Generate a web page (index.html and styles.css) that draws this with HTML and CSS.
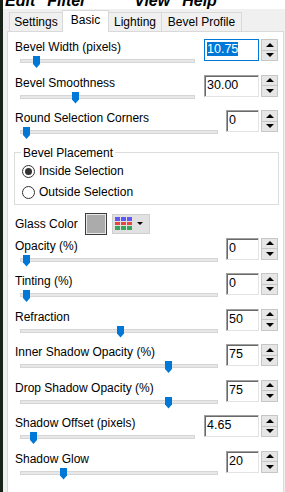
FILE: index.html
```html
<!DOCTYPE html>
<html lang="en">

<head>
    <meta charset="UTF-8" />
    <title>Bevel - Basic</title>
    <link rel="stylesheet" href="styles.css">
</head>

<body>
    <div class="menubar">
        <span>Edit</span><span>Filter</span><span>View</span><span>Help</span>
    </div>

    <div class="dialog">
        <div class="tabs">
            <div class="tab t-settings">Settings</div>
            <div class="tab t-basic active">Basic</div>
            <div class="tab t-lighting">Lighting</div>
            <div class="tab t-profile">Bevel Profile</div>
        </div>

        <div class="page">
            <div class="row">
                <div class="ctl">
                    <div class="label">Bevel Width (pixels)</div>
                    <div class="track wide"><span class="thumb" style="left: 12px;"></span></div>
                </div>
                <div class="spin">
                    <div class="edit wide focus"><span class="sel">10.75</span></div>
                    <div class="arrows"><span class="up"></span><span class="down"></span></div>
                </div>
            </div>

            <div class="row">
                <div class="ctl">
                    <div class="label">Bevel Smoothness</div>
                    <div class="track wide"><span class="thumb" style="left: 51px;"></span></div>
                </div>
                <div class="spin">
                    <div class="edit wide">30.00</div>
                    <div class="arrows"><span class="up"></span><span class="down"></span></div>
                </div>
            </div>

            <div class="row">
                <div class="ctl">
                    <div class="label">Round Selection Corners</div>
                    <div class="track"><span class="thumb" style="left: 2px;"></span></div>
                </div>
                <div class="spin">
                    <div class="edit">0</div>
                    <div class="arrows"><span class="up"></span><span class="down"></span></div>
                </div>
            </div>

            <fieldset class="group">
                <legend>Bevel Placement</legend>
                <div class="radio"><span class="dot checked"></span>Inside Selection</div>
                <div class="radio"><span class="dot"></span>Outside Selection</div>
            </fieldset>

            <div class="glass">
                <div class="glass-label">Glass Color</div>
                <div class="swatch"></div>
                <div class="picker">
                    <svg width="17" height="13" viewBox="0 0 17 13">
                        <rect x="0" y="0" width="5" height="4" fill="#6157f2" />
                        <rect x="6" y="0" width="5" height="4" fill="#6157f2" />
                        <rect x="12" y="0" width="5" height="4" fill="#6157f2" />
                        <rect x="0" y="5" width="5" height="3" fill="#e8453f" />
                        <rect x="6" y="5" width="5" height="3" fill="#e8453f" />
                        <rect x="12" y="5" width="5" height="3" fill="#e8453f" />
                        <rect x="0" y="9" width="5" height="4" fill="#38a35a" />
                        <rect x="6" y="9" width="5" height="4" fill="#38a35a" />
                        <rect x="12" y="9" width="5" height="4" fill="#38a35a" />
                    </svg>
                    <span class="caret"></span>
                </div>
            </div>

            <div class="row">
                <div class="ctl">
                    <div class="label">Opacity (%)</div>
                    <div class="track"><span class="thumb" style="left: 2px;"></span></div>
                </div>
                <div class="spin">
                    <div class="edit">0</div>
                    <div class="arrows"><span class="up"></span><span class="down"></span></div>
                </div>
            </div>

            <div class="row">
                <div class="ctl">
                    <div class="label">Tinting (%)</div>
                    <div class="track"><span class="thumb" style="left: 2px;"></span></div>
                </div>
                <div class="spin">
                    <div class="edit">0</div>
                    <div class="arrows"><span class="up"></span><span class="down"></span></div>
                </div>
            </div>

            <div class="row">
                <div class="ctl">
                    <div class="label">Refraction</div>
                    <div class="track"><span class="thumb" style="left: 96px;"></span></div>
                </div>
                <div class="spin">
                    <div class="edit">50</div>
                    <div class="arrows"><span class="up"></span><span class="down"></span></div>
                </div>
            </div>

            <div class="row">
                <div class="ctl">
                    <div class="label">Inner Shadow Opacity (%)</div>
                    <div class="track"><span class="thumb" style="left: 144px;"></span></div>
                </div>
                <div class="spin">
                    <div class="edit">75</div>
                    <div class="arrows"><span class="up"></span><span class="down"></span></div>
                </div>
            </div>

            <div class="row">
                <div class="ctl">
                    <div class="label">Drop Shadow Opacity (%)</div>
                    <div class="track"><span class="thumb" style="left: 144px;"></span></div>
                </div>
                <div class="spin">
                    <div class="edit">75</div>
                    <div class="arrows"><span class="up"></span><span class="down"></span></div>
                </div>
            </div>

            <div class="row">
                <div class="ctl">
                    <div class="label">Shadow Offset (pixels)</div>
                    <div class="track wide"><span class="thumb" style="left: 9px;"></span></div>
                </div>
                <div class="spin">
                    <div class="edit wide">4.65</div>
                    <div class="arrows"><span class="up"></span><span class="down"></span></div>
                </div>
            </div>

            <div class="row">
                <div class="ctl">
                    <div class="label">Shadow Glow</div>
                    <div class="track"><span class="thumb" style="left: 39px;"></span></div>
                </div>
                <div class="spin">
                    <div class="edit">20</div>
                    <div class="arrows"><span class="up"></span><span class="down"></span></div>
                </div>
            </div>
        </div>
    </div>
</body>

</html>
```

FILE: styles.css
```css
* {
    box-sizing: border-box;
}

html,
body {
    margin: 0;
    height: 100%;
}

body {
    font-family: "Liberation Sans", Arial, sans-serif;
    font-size: 12px;
    color: #000;
    background: #f0f0f0;
    border-left: 3px solid #18241a;
    overflow: hidden;
}

/* menu bar, only its lower part is visible */
.menubar {
    height: 9px;
    overflow: hidden;
    background: #fff;
    display: flex;
    align-items: flex-end;
    gap: 12px;
    padding-left: 2px;
    font: italic bold 16px/16px "Liberation Sans", Arial, sans-serif;
}

.menubar span:nth-child(3) {
    margin-left: 36px;
}

.dialog {
    padding-left: 4px;
    padding-right: 1px;
}

/* tabs */
.tabs {
    display: flex;
    align-items: flex-end;
    height: 22px;
    padding-left: 2px;
}

.tab {
    height: 19px;
    line-height: 18px;
    text-align: center;
    background: #f0f0f0;
    border: 1px solid #d9d9d9;
    border-bottom: none;
    margin-right: -1px;
}

.tab.active {
    height: 22px;
    line-height: 19px;
    background: #fff;
    position: relative;
    z-index: 1;
    margin-bottom: -1px;
}

.t-settings { width: 54px; }
.t-basic { width: 47px; }
.t-lighting { width: 54px; }
.t-profile { width: 81px; }

.page {
    background: #fff;
    border: 1px solid #d9d9d9;
    height: 470px;
    padding-top: 7px;
}

/* one label + slider + spin box */
.row {
    display: flex;
    justify-content: space-between;
    height: 35.5px;
    padding: 0 5px 0 7px;
}

.ctl {
    display: flex;
    flex-direction: column;
}

.label {
    line-height: 14px;
    margin-top: 1px;
    white-space: nowrap;
}

.track {
    position: relative;
    width: 198px;
    height: 4px;
    margin: 5px 0 0 5px;
    background: #e7e7e7;
    border: 1px solid #d6d6d6;
}

.track.wide {
    width: 175px;
}

.thumb {
    position: absolute;
    top: -4px;
    width: 7px;
    height: 12px;
    background: #0078d7;
    clip-path: polygon(0 0, 100% 0, 100% 66%, 50% 100%, 0 66%);
}

.spin {
    display: flex;
    gap: 2px;
    height: 22px;
}

.edit {
    width: 33px;
    height: 22px;
    padding-left: 2px;
    line-height: 18px;
    border: 1px solid;
    border-color: #a0a0a0 #e3e3e3 #e3e3e3 #a0a0a0;
    box-shadow: inset 1px 1px 0 #696969;
    font-size: 12.5px;
}

.edit.wide {
    width: 55px;
}

.edit.focus {
    border-color: #0078d7;
    box-shadow: none;
}

.sel {
    background: #0078d7;
    color: #fff;
}

.arrows {
    width: 17px;
    display: flex;
    flex-direction: column;
    border: 1px solid #c6c6c6;
    background: #e6e6e6;
}

.arrows span {
    flex: 1;
    display: flex;
    align-items: center;
    justify-content: center;
}

.arrows .up {
    border-bottom: 1px solid #c6c6c6;
}

.arrows span::after {
    content: "";
    border-left: 4px solid transparent;
    border-right: 4px solid transparent;
}

.arrows .up::after {
    border-bottom: 4px solid #000;
}

.arrows .down::after {
    border-top: 4px solid #000;
}

/* Bevel Placement group */
.group {
    margin: 0 4px 0 6px;
    padding: 1px 0 1px 6px;
    border: 1px solid #dcdcdc;
}

.group legend {
    padding: 0 2px;
    line-height: 14px;
}

.radio {
    display: flex;
    align-items: center;
    gap: 4px;
    height: 21px;
    padding-left: 1px;
}

.dot {
    width: 13px;
    height: 13px;
    border-radius: 50%;
    border: 1px solid #333;
    background: #fff;
    display: flex;
    align-items: center;
    justify-content: center;
}

.dot.checked::after {
    content: "";
    width: 7px;
    height: 7px;
    border-radius: 50%;
    background: #333;
}

/* glass color */
.glass {
    display: flex;
    align-items: center;
    height: 22px;
    margin: 8px 0 3px;
    padding-left: 7px;
}

.glass-label {
    width: 70px;
}

.swatch {
    width: 22px;
    height: 22px;
    border: 1px solid #3c3c3c;
    background: #ababab;
    box-shadow: inset 0 0 0 1px #e8e8e8;
}

.picker {
    display: flex;
    align-items: center;
    gap: 5px;
    width: 38px;
    height: 20px;
    margin-left: 5px;
    padding-left: 2px;
    background: #e1e1e1;
    border: 1px solid #cfcfcf;
}

.caret {
    border-left: 3px solid transparent;
    border-right: 3px solid transparent;
    border-top: 3px solid #000;
}
```
